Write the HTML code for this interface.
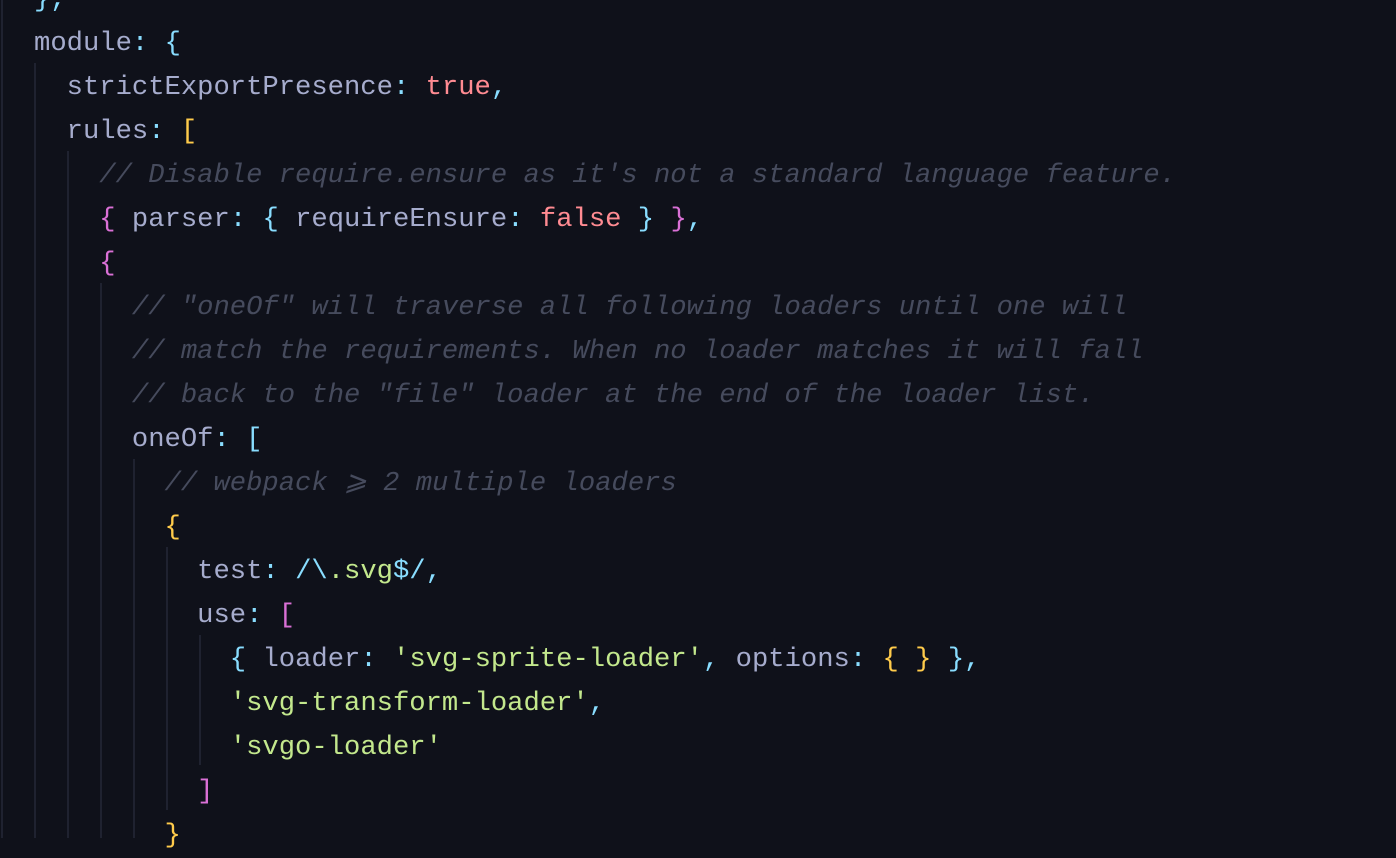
<!DOCTYPE html>
<html><head><meta charset="utf-8"><style>
html,body{margin:0;padding:0;background:#0f111a;width:1396px;height:838px;overflow:hidden}
pre{position:absolute;left:34px;top:-22px;margin:0;font-family:"Liberation Mono",monospace;font-size:27.2px;line-height:44px;color:#a6accd;white-space:pre}
.p{color:#89ddff}.b{color:#89ddff}.y{color:#ffcb4b}.m{color:#da70d6}.r{color:#ff8b92}.s{color:#c3e88d}
.c{color:#464b5d;font-style:italic}
.g{position:absolute;width:2px;background:#1f2230}
</style></head><body>
<div class="g" style="left:1px;top:0;height:838px"></div>
<div class="g" style="left:34px;top:63px;height:775px"></div>
<div class="g" style="left:67px;top:151px;height:687px"></div>
<div class="g" style="left:100px;top:283px;height:555px"></div>
<div class="g" style="left:133px;top:459px;height:379px"></div>
<div class="g" style="left:166px;top:547px;height:263px"></div>
<div class="g" style="left:199px;top:635px;height:130px"></div>
<pre><span class="b">}</span><span class="p">,</span>
module<span class="p">:</span> <span class="b">{</span>
  strictExportPresence<span class="p">:</span> <span class="r">true</span><span class="p">,</span>
  rules<span class="p">:</span> <span class="y">[</span>
    <span class="c">// Disable require.ensure as it's not a standard language feature.</span>
    <span class="m">{</span> parser<span class="p">:</span> <span class="b">{</span> requireEnsure<span class="p">:</span> <span class="r">false</span> <span class="b">}</span> <span class="m">}</span><span class="p">,</span>
    <span class="m">{</span>
      <span class="c">// "oneOf" will traverse all following loaders until one will</span>
      <span class="c">// match the requirements. When no loader matches it will fall</span>
      <span class="c">// back to the "file" loader at the end of the loader list.</span>
      oneOf<span class="p">:</span> <span class="b">[</span>
        <span class="c">// webpack ⩾ 2 multiple loaders</span>
        <span class="y">{</span>
          test<span class="p">:</span> <span class="p">/\</span><span class="s">.svg</span><span class="p">$/</span><span class="p">,</span>
          use<span class="p">:</span> <span class="m">[</span>
            <span class="b">{</span> loader<span class="p">:</span> <span class="s">'svg-sprite-loader'</span><span class="p">,</span> options<span class="p">:</span> <span class="y">{</span> <span class="y">}</span> <span class="b">}</span><span class="p">,</span>
            <span class="s">'svg-transform-loader'</span><span class="p">,</span>
            <span class="s">'svgo-loader'</span>
          <span class="m">]</span>
        <span class="y">}</span></pre>
</body></html>
